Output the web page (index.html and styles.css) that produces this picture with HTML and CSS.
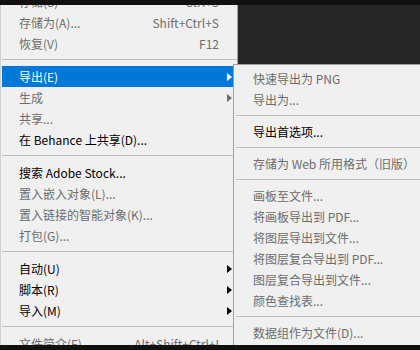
FILE: index.html
```html
<!DOCTYPE html>
<html lang="zh-CN">
<head>
<meta charset="utf-8">
<link rel="stylesheet" href="styles.css">
</head>
<body>
<div class="screen">
  <div class="menu main">
    <div class="row off"><span class="label">存储(S)</span><span class="key">Ctrl+S</span><span class="arrow none"></span></div>
    <div class="row off"><span class="label">存储为(A)...</span><span class="key">Shift+Ctrl+S</span><span class="arrow none"></span></div>
    <div class="row off"><span class="label">恢复(V)</span><span class="key">F12</span><span class="arrow none"></span></div>
    <div class="sep"></div>
    <div class="row active"><span class="label">导出(E)</span><span class="key"></span><span class="arrow"></span></div>
    <div class="row off"><span class="label">生成</span><span class="key"></span><span class="arrow"></span></div>
    <div class="row off"><span class="label">共享...</span><span class="key"></span><span class="arrow none"></span></div>
    <div class="row"><span class="label">在 Behance 上共享(D)...</span><span class="key"></span><span class="arrow none"></span></div>
    <div class="sep"></div>
    <div class="row"><span class="label">搜索 Adobe Stock...</span><span class="key"></span><span class="arrow none"></span></div>
    <div class="row off"><span class="label">置入嵌入对象(L)...</span><span class="key"></span><span class="arrow none"></span></div>
    <div class="row off"><span class="label">置入链接的智能对象(K)...</span><span class="key"></span><span class="arrow none"></span></div>
    <div class="row off"><span class="label">打包(G)...</span><span class="key"></span><span class="arrow none"></span></div>
    <div class="sep"></div>
    <div class="row"><span class="label">自动(U)</span><span class="key"></span><span class="arrow"></span></div>
    <div class="row"><span class="label">脚本(R)</span><span class="key"></span><span class="arrow"></span></div>
    <div class="row"><span class="label">导入(M)</span><span class="key"></span><span class="arrow"></span></div>
    <div class="sep"></div>
    <div class="row off"><span class="label">文件简介(F)...</span><span class="key">Alt+Shift+Ctrl+I</span><span class="arrow none"></span></div>
  </div>
  <div class="menu sub">
    <div class="row off"><span class="label">快速导出为 PNG</span></div>
    <div class="row off"><span class="label">导出为...</span></div>
    <div class="sep"></div>
    <div class="row"><span class="label">导出首选项...</span></div>
    <div class="sep"></div>
    <div class="row off"><span class="label">存储为 Web 所用格式（旧版）</span></div>
    <div class="sep"></div>
    <div class="row off"><span class="label">画板至文件...</span></div>
    <div class="row off"><span class="label">将画板导出到 PDF...</span></div>
    <div class="row off"><span class="label">将图层导出到文件...</span></div>
    <div class="row off"><span class="label">将图层复合导出到 PDF...</span></div>
    <div class="row off"><span class="label">图层复合导出到文件...</span></div>
    <div class="row off"><span class="label">颜色查找表...</span></div>
    <div class="sep"></div>
    <div class="row off"><span class="label">数据组作为文件(D)...</span></div>
  </div>
  <div class="bar top"></div>
  <div class="bar bottom"></div>
</div>
</body>
</html>
```

FILE: styles.css
```css
* { box-sizing: border-box; }
html, body { margin: 0; padding: 0; }
body {
  width: 420px;
  height: 350px;
  overflow: hidden;
  font-family: "Noto Sans CJK SC", sans-serif;
  font-size: 12px;
  color: #000;
}
.screen {
  position: relative;
  width: 420px;
  height: 350px;
  background: #262626;
  overflow: hidden;
}
.bar {
  position: absolute;
  left: 0;
  right: 0;
  height: 5px;
  background: #111111;
}
.bar.top { top: 0; }
.bar.bottom { bottom: 0; }

.menu {
  position: absolute;
  background: #f0f0f0;
  display: flex;
  flex-direction: column;
}
.main {
  left: 0;
  top: -9px;
  width: 238px;
  height: 380px;
  border-left: 1px solid #cfcfcf;
  border-right: 1px solid #a0a0a0;
  padding-left: 1px;
}
.sub {
  left: 233px;
  top: 64px;
  right: -10px;
  bottom: -10px;
  border-top: 1px solid #a0a0a0;
  border-left: 1px solid #a0a0a0;
  padding-top: 3px;
}
.row {
  height: 21px;
  display: flex;
  align-items: center;
  white-space: nowrap;
  line-height: 20px;
}
.main .row { padding: 1px 5px 0 17px; }
.main .row .arrow { margin-top: -1px; }
.sub .row { padding-left: 19px; }
.row .label { flex: 1; }
.row .key { color: inherit; }
.row.off { color: #6d6d6d; }
.row.active { background: #0078d7; color: #fff; }
.arrow {
  width: 0;
  height: 0;
  margin-left: 8px;
  border-left: 5px solid currentColor;
  border-top: 4.5px solid transparent;
  border-bottom: 4.5px solid transparent;
}
.arrow.none { border-left-color: transparent; }
.main .sep {
  height: 12px;
  padding-top: 5px;
}
.sub .sep {
  height: 11px;
  padding: 5px 0 0 2px;
}
.sep::before {
  content: "";
  display: block;
  height: 1px;
  background: #bdbdbd;
}
```
